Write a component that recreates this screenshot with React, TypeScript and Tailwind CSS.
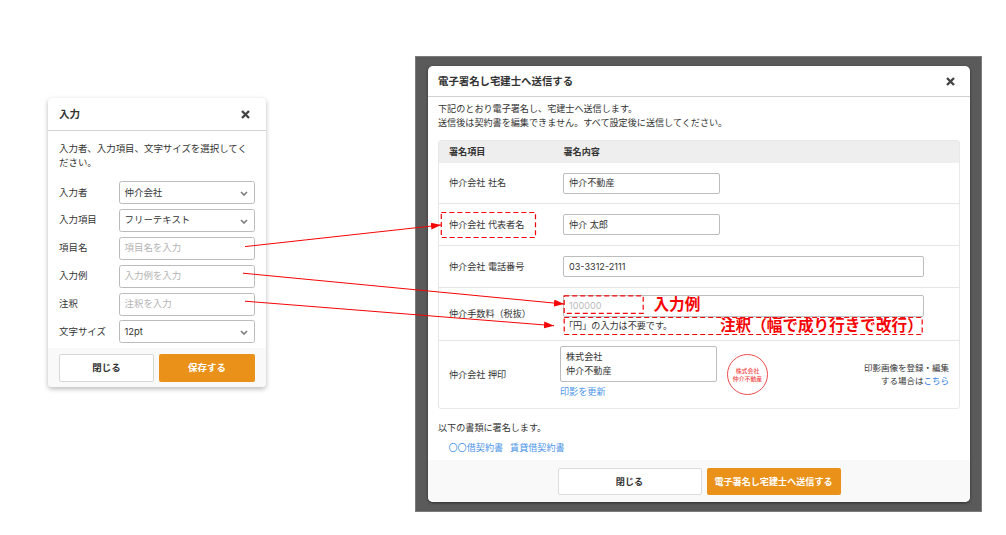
import type { ReactNode } from "react";

function CloseIcon() {
  return (
    <svg className="size-[9px]" viewBox="0 0 9 9" fill="none" stroke="#444" strokeWidth="2.4">
      <path d="M1 1L8 8M8 1L1 8" />
    </svg>
  );
}

function FieldRow({ label, value, kind }: { label: string; value: string; kind: "select" | "text" }) {
  return (
    <div className="flex h-[23px] items-center">
      <span className="w-[60px] shrink-0 whitespace-nowrap">{label}</span>
      <div
        className={
          "flex h-[23px] flex-1 items-center justify-between rounded-[2.5px] border border-[#bbb] bg-white pr-[6px] pl-[4.5px] " +
          (kind === "text" ? "text-[#b3b3b3]" : "")
        }
      >
        <span>{value}</span>
        {kind === "select" && (
          <svg className="mt-[2px] h-[5px] w-[8px]" viewBox="0 0 8 5" fill="none" stroke="#808080" strokeWidth="1.7">
            <path d="M1 1L4 4L7 1" />
          </svg>
        )}
      </div>
    </div>
  );
}

function InputDialog() {
  return (
    <section className="mt-[98px] ml-[48px] flex h-[289px] w-[218px] shrink-0 flex-col overflow-hidden rounded-[4px] bg-white text-[9.45px] leading-[14px] shadow-[0_2px_5px_rgba(0,0,0,0.28)]">
      <header className="flex h-[33px] shrink-0 items-center justify-between border-b border-[#d2d2d2] pt-px pr-[16px] pl-[11px]">
        <h2 className="pt-px text-[10.6px] font-bold">入力</h2>
        <CloseIcon />
      </header>
      <div className="flex-1 px-[11px] pt-[11px]">
        <p className="w-[192px]">入力者、入力項目、文字サイズを選択してください。</p>
        <div className="mt-[11px] flex flex-col gap-[4.9px]">
          <FieldRow label="入力者" value="仲介会社" kind="select" />
          <FieldRow label="入力項目" value="フリーテキスト" kind="select" />
          <FieldRow label="項目名" value="項目名を入力" kind="text" />
          <FieldRow label="入力例" value="入力例を入力" kind="text" />
          <FieldRow label="注釈" value="注釈を入力" kind="text" />
          <FieldRow label="文字サイズ" value="12pt" kind="select" />
        </div>
      </div>
      <footer className="flex h-[39px] shrink-0 gap-[5px] bg-[#f9f9f9] px-[11px] pt-[6px] font-bold">
        <button className="h-[28px] w-[95px] rounded-[2px] border border-[#d8d8d8] bg-white">閉じる</button>
        <button className="h-[28px] w-[96px] rounded-[2px] bg-[#e99119] text-white">保存する</button>
      </footer>
    </section>
  );
}

function TableRow({ label, className, children }: { label: string; className: string; children: ReactNode }) {
  return (
    <div className={"flex items-center border-t border-[#e6e6e6] pl-[10px] " + className}>
      <span className="w-[114px] shrink-0 whitespace-nowrap">{label}</span>
      {children}
    </div>
  );
}

function SignDialog() {
  return (
    <div className="mt-[56px] ml-[149px] h-[456px] w-[567px] shrink-0 border border-[#7b7b7b] bg-[#5a5a5a] pt-[9px] pl-[12px] text-[9.1px] leading-[13.7px]">
      <section className="flex h-[436px] w-[542px] flex-col overflow-hidden rounded-[5px] bg-white shadow-[0_1px_3px_rgba(0,0,0,0.5)]">
        <header className="flex h-[31px] shrink-0 items-center justify-between border-b border-[#d2d2d2] pr-[15px] pl-[10px]">
          <h2 className="pt-[2px] text-[10.4px] font-bold">電子署名し宅建士へ送信する</h2>
          <CloseIcon />
        </header>
        <div className="flex-1 px-[10px] pt-[5px]">
          <p>下記のとおり電子署名し、宅建士へ送信します。</p>
          <p>送信後は契約書を編集できません。すべて設定後に送信してください。</p>
          <div className="mt-[10.6px] h-[269px] w-[522px] overflow-hidden rounded-[3px] border border-[#e8e8e8]">
            <div className="flex h-[21px] items-center bg-[#eee] pl-[10px] font-bold">
              <span className="w-[114.5px]">署名項目</span>
              <span>署名内容</span>
            </div>
            <TableRow label="仲介会社 社名" className="h-[41px] border-t-[#eee]">
              <div className="flex h-[21px] w-[157px] items-center rounded-[2px] border border-[#bdbdbd] pl-[5px]">仲介不動産</div>
            </TableRow>
            <TableRow label="仲介会社 代表者名" className="h-[42px]">
              <div className="flex h-[21px] w-[157px] items-center rounded-[2px] border border-[#bdbdbd] pl-[5px]">仲介 太郎</div>
            </TableRow>
            <TableRow label="仲介会社 電話番号" className="h-[42px]">
              <div className="flex h-[21px] w-[361px] items-center rounded-[2px] border border-[#bdbdbd] pl-[5px]">03-3312-2111</div>
            </TableRow>
            <TableRow label="仲介手数料（税抜）" className="h-[53px]">
              <div className="w-[361px]">
                <div className="flex h-[22px] items-center rounded-[2px] border border-[#bdbdbd] pl-[5px] text-[#bbb]">100000</div>
                <p className="mt-[2px] h-[14px] pl-px">「円」の入力は不要です。</p>
              </div>
            </TableRow>
            <TableRow label="仲介会社 押印" className="h-[68px]">
              <div className="-ml-[3px] w-[157px] self-start pt-[5px]">
                <div className="h-[36px] rounded-[2px] border border-[#bdbdbd] pt-[3px] pl-[5px]">
                  株式会社
                  <br />
                  仲介不動産
                </div>
                <div className="mt-[3px] text-[#4d94e6]">印影を更新</div>
              </div>
              <div className="ml-[10px] flex size-[41px] flex-col items-center justify-center rounded-full border-[1.5px] border-[#f04b4b] text-center text-[5.9px] leading-[7.4px] font-medium whitespace-nowrap text-[#f04b4b]">
                <span>株式会社</span>
                <span>仲介不動産</span>
              </div>
              <p className="mr-[10px] ml-auto text-right text-[8.5px] leading-[13px]">
                印影画像を登録・編集
                <br />
                する場合は<span className="text-[#2878ea]">こちら</span>
              </p>
            </TableRow>
          </div>
          <p className="mt-[12px]">以下の書類に署名します。</p>
          <div className="mt-[6.5px] flex gap-[7px] pl-[10.5px] text-[#4d94e6]">
            <span>〇〇借契約書</span>
            <span>賃貸借契約書</span>
          </div>
        </div>
        <footer className="flex h-[42px] shrink-0 gap-[5px] bg-[#f9f9f9] pt-[8px] pl-[129.5px] font-bold">
          <button className="h-[27px] w-[144px] rounded-[2px] border border-[#dcdcdc] bg-white">閉じる</button>
          <button className="h-[27px] w-[134px] rounded-[2px] bg-[#e99119] whitespace-nowrap text-white">電子署名し宅建士へ送信する</button>
        </footer>
      </section>
    </div>
  );
}

function Annotations() {
  return (
    <div className="pointer-events-none absolute inset-0 text-[15.6px] leading-[18px] font-bold whitespace-nowrap text-[#f50505]">
      <svg className="absolute inset-0" width="1006" height="535" fill="none" stroke="#f50505">
        <defs>
          <marker id="head" markerUnits="userSpaceOnUse" markerWidth="11" markerHeight="8" refX="10" refY="3.5" orient="auto">
            <path d="M0 0L10 3.5L0 7Z" fill="#f50505" stroke="none" />
          </marker>
        </defs>
        <path d="M245 246.6L441 225" markerEnd="url(#head)" />
        <path d="M243 273.2L564 304" markerEnd="url(#head)" />
        <path d="M245 301.2L554 325.7" markerEnd="url(#head)" />
        <g strokeWidth="1.2" strokeDasharray="5 3">
          <rect x="441.3" y="212.5" width="94.2" height="25" />
          <rect x="564.2" y="295.8" width="79" height="17.6" />
          <rect x="564.2" y="317.5" width="358" height="17" />
        </g>
      </svg>
      <span className="absolute top-[296px] left-[653.5px]">入力例</span>
      <span className="absolute top-[317px] left-[720px]">注釈（幅で成り行きで改行）</span>
    </div>
  );
}

export default function App() {
  return (
    <main className="relative flex h-[535px] w-[1006px] items-start overflow-hidden bg-white font-[Inter,'Noto_Sans_CJK_JP',sans-serif] text-[#333]">
      <InputDialog />
      <SignDialog />
      <Annotations />
    </main>
  );
}
